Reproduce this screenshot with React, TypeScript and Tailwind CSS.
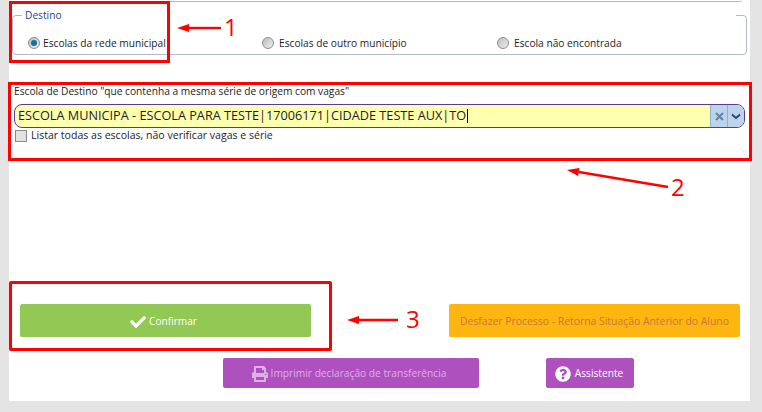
import { FaCheck, FaPrint, FaQuestionCircle } from "react-icons/fa";

const FONT = "font-['Open_Sans','Liberation_Sans',sans-serif]";

function Radio({ label, checked }: { label: string; checked?: boolean }) {
  return (
    <label className={`flex items-center text-[10.2px] leading-[14px] text-[#1c1c1c] ${checked ? "gap-[3px]" : "gap-[5px]"}`}>
      <span className="flex h-[12px] w-[12px] items-center justify-center rounded-full border border-[#8d8d8d] bg-[linear-gradient(135deg,#bdbdbd,#eeeeee)]">
        {checked && <span className="h-[6px] w-[6px] rounded-full bg-[#0b6fa8]" />}
      </span>
      {label}
    </label>
  );
}

function Arrow({ className, x1, y1, x2, y2 }: { className: string; x1: number; y1: number; x2: number; y2: number }) {
  const a = Math.atan2(y2 - y1, x2 - x1);
  const bx = x2 - Math.cos(a) * 12;
  const by = y2 - Math.sin(a) * 12;
  const nx = -Math.sin(a) * 4;
  const ny = Math.cos(a) * 4;
  return (
    <svg className={className} width="762" height="412" viewBox="0 0 762 412" fill="none">
      <line x1={x1} y1={y1} x2={bx} y2={by} stroke="#ff0000" strokeWidth="2.4" />
      <polygon points={`${x2},${y2} ${bx + nx},${by + ny} ${bx - nx},${by - ny}`} fill="#ff0000" />
    </svg>
  );
}

export default function App() {
  return (
    <div className={`relative h-[412px] w-[762px] overflow-hidden bg-[#e4e4e4] ${FONT}`}>
      <div className="ml-[9px] h-[401px] w-[741px] bg-white">
        <div className="h-[2px] w-[733px] rounded-br-[4px] border-b border-[#b9b9c4]" />

        <fieldset className="relative ml-[3px] mt-[13px] h-[40px] w-[735px] rounded-[4px] border border-[#b4b8cc] pl-[15px] pt-[20px]">
          <div className="absolute left-[9px] top-[-1px] h-[10px] w-[714px] bg-white" />
          <span className="absolute left-[12px] top-[-8px] text-[10.2px] leading-[14px] text-[#1c3f94]">
            Destino
          </span>
          <div className="flex">
            <div className="w-[234px]">
              <Radio label="Escolas da rede municipal" checked />
            </div>
            <div className="w-[235px]">
              <Radio label="Escolas de outro município" />
            </div>
            <Radio label="Escola não encontrada" />
          </div>
        </fieldset>

        <div className="ml-[5px] mt-[29px] w-[731px]">
          <div className="text-[10.2px] leading-[14px] text-[#1c1c1c]">
            Escola de Destino "que contenha a mesma série de origem com vagas"
          </div>
          <div className="mt-[6px] flex h-[24px] overflow-hidden rounded-[8px] border border-[#5a3a94] bg-[#ffffb0]">
            <div className="flex flex-1 items-center pl-[3px] text-[12.7px] text-[#1c1c1c]">
              ESCOLA MUNICIPA - ESCOLA PARA TESTE|17006171|CIDADE TESTE AUX|TO
              <span className="ml-[1px] h-[14px] w-px bg-black" />
            </div>
            <div className="flex w-[17px] items-center justify-center border-l border-[#8fb0d6] bg-[#bcd3ea] text-[#5f83ad]">
              <svg width="9" height="9" viewBox="0 0 9 9">
                <path d="M1 1l7 7M8 1L1 8" stroke="currentColor" strokeWidth="2" />
              </svg>
            </div>
            <div className="flex w-[17px] items-center justify-center border-l border-[#8fb0d6] bg-[#bcd3ea] text-[#24477e]">
              <svg width="10" height="7" viewBox="0 0 10 7" fill="none">
                <path d="M1 1.5l4 3.5 4-3.5" stroke="currentColor" strokeWidth="2" />
              </svg>
            </div>
          </div>
          <label className="mt-px flex items-center gap-[4px] text-[10.55px] leading-[13px] text-[#1c1c1c]">
            <span className="ml-px h-[12px] w-[12px] border border-[#8a8a8a] bg-[#e2e2e2]" />
            Listar todas as escolas, não verificar vagas e série
          </label>
        </div>

        <div className="ml-[11px] mt-[162px] flex w-[720px] justify-between">
          <button className="flex h-[33px] w-[291px] items-center justify-center gap-[3px] rounded-[2px] bg-[#92c854] pr-[4px] pt-[2px] text-[10.1px] text-white">
            <FaCheck size={16} />
            Confirmar
          </button>
          <button className="flex h-[33px] w-[291px] items-center justify-center rounded-[2px] bg-[#fdb50f] pt-[2px] text-[10.4px] text-[#c9763f]">
            Desfazer Processo - Retorna Situação Anterior do Aluno
          </button>
        </div>

        <div className="ml-[214px] mt-[21px] flex gap-[67px]">
          <button className="flex h-[30px] w-[256px] items-center justify-center gap-[3px] rounded-[2px] bg-[#ae50bd] pr-[4px] pt-px text-[10.2px] text-[#dfb0e6]">
            <FaPrint size={16} />
            Imprimir declaração de transferência
          </button>
          <button className="flex h-[30px] w-[88px] items-center justify-center gap-[4px] rounded-[2px] bg-[#ae50bd] pr-[2px] pt-px text-[10.2px] text-white">
            <FaQuestionCircle size={16} />
            Assistente
          </button>
        </div>
      </div>

      <div className="absolute left-[9px] top-[1px] h-[62px] w-[161px] border-[3px] border-[#ff0000]" />
      <div className="absolute left-[8px] top-[82px] h-[79px] w-[744px] border-[3px] border-[#ff0000]" />
      <div className="absolute left-[9px] top-[281px] h-[70px] w-[323px] rounded-[2px] border-[3px] border-[#ff0000]" />

      <Arrow className="absolute left-0 top-0" x1={221} y1={28} x2={177} y2={28} />
      <Arrow className="absolute left-0 top-0" x1={668} y1={187} x2={567} y2={170} />
      <Arrow className="absolute left-0 top-0" x1={398} y1={320} x2={347} y2={320} />

      <span className="absolute left-[224px] top-[13px] text-[24px] leading-[28px] text-[#ff0000]">1</span>
      <span className="absolute left-[671px] top-[173px] text-[24px] leading-[28px] text-[#ff0000]">2</span>
      <span className="absolute left-[406px] top-[305px] text-[24px] leading-[28px] text-[#ff0000]">3</span>
    </div>
  );
}
